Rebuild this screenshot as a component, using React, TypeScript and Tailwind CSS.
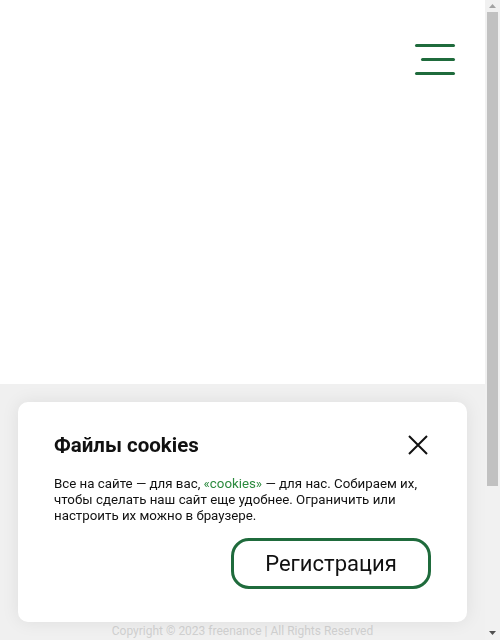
function FakeScrollbar() {
  return (
    <div className="flex h-full w-[15px] shrink-0 flex-col bg-[#f1f1f1]">
      <div className="flex h-[12px] items-center justify-center">
        <svg width="7" height="4" viewBox="0 0 7 4">
          <path d="M3.5 0L7 4H0z" fill="#a3a3a3" />
        </svg>
      </div>
      <div className="mx-[2px] h-[474px] bg-[#c1c1c1]" />
      <div className="flex-1" />
      <div className="flex h-[14px] items-center justify-center">
        <svg width="7" height="4" viewBox="0 0 7 4">
          <path d="M0 0H7L3.5 4z" fill="#505050" />
        </svg>
      </div>
    </div>
  );
}

export default function App() {
  return (
    <div className="flex h-screen overflow-hidden bg-white font-['Roboto',sans-serif] text-[#111]">
      <main className="min-w-0 flex-1 overflow-hidden">
        <header className="flex h-[384px] items-start justify-end bg-white pr-[30px] pt-[44px]">
          <button aria-label="Меню" className="flex w-[40px] flex-col items-end gap-[11px]">
            <span className="block h-[3px] w-[40px] rounded-full bg-[#1f6b3c]" />
            <span className="block h-[3px] w-[34px] rounded-full bg-[#1f6b3c]" />
            <span className="block h-[3px] w-[40px] rounded-full bg-[#1f6b3c]" />
          </button>
        </header>

        <footer className="flex h-[448px] flex-col items-center bg-[#f0f0f0] pt-[238px]">
          <p className="text-[12px] text-[#d0d0d0]">
            Copyright © 2023 freenance | All Rights Reserved
          </p>
        </footer>
      </main>
      <FakeScrollbar />

      <div className="fixed bottom-[18px] left-[18px] right-[33px] rounded-[10px] bg-white px-[36px] pb-[33px] pt-[30px] shadow-[0_0_18px_rgba(0,0,0,0.08)]">
        <div className="flex items-center justify-between">
          <h2 className="text-[20.5px] font-bold leading-[26px] text-[#111]">Файлы cookies</h2>
          <button aria-label="Закрыть" className="mr-[3px] flex h-[20px] w-[20px] items-center justify-center">
            <svg width="20" height="20" viewBox="0 0 20 20" fill="none" stroke="#111" strokeWidth="2">
              <path d="M1 1L19 19M19 1L1 19" />
            </svg>
          </button>
        </div>
        <p className="mt-[18px] text-[13.3px] leading-[16px] text-[#111]">
          Все на сайте — для вас, <span className="text-[#2b8a3e]">«cookies»</span> — для нас. Собираем их,
          <br />
          чтобы сделать наш сайт еще удобнее. Ограничить или
          <br />
          настроить их можно в браузере.
        </p>
        <div className="mt-[14px] flex justify-end">
          <button className="h-[51px] w-[200px] rounded-[18px] border-[3px] border-[#1f6b3c] text-[22px] text-[#111]">
            Регистрация
          </button>
        </div>
      </div>
    </div>
  );
}
